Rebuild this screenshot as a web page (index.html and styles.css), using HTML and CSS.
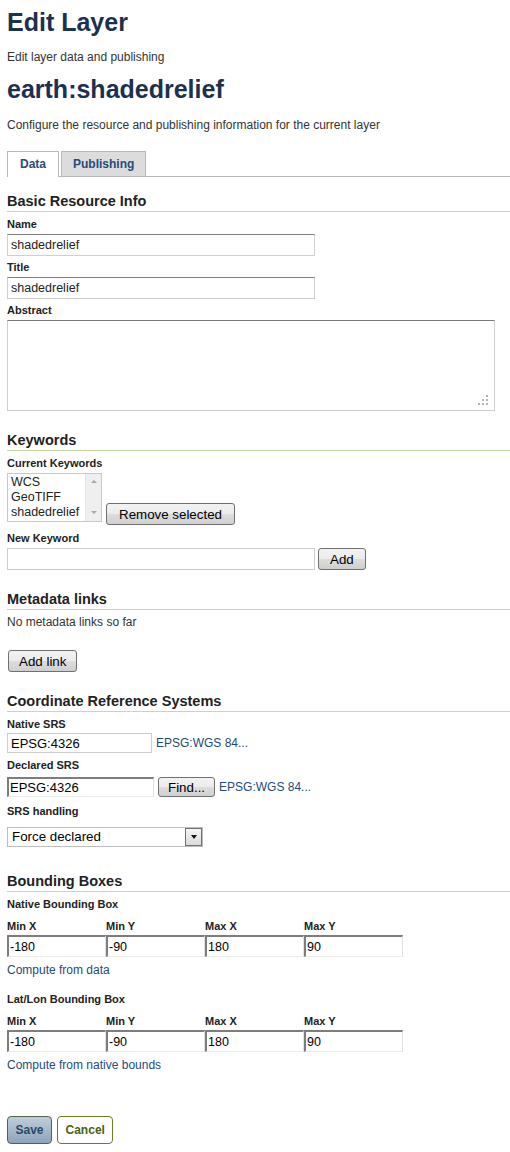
FILE: index.html
```html
<!DOCTYPE html>
<html lang="en">
<head>
<meta charset="utf-8">
<title>Edit Layer</title>
<link rel="stylesheet" href="styles.css">
</head>
<body>
<div class="page">
  <h1 class="title">Edit Layer</h1>
  <p class="subtitle">Edit layer data and publishing</p>
  <h2 class="layer-name">earth:shadedrelief</h2>
  <p class="desc">Configure the resource and publishing information for the current layer</p>

  <ul class="tabs">
    <li class="tab active">Data</li>
    <li class="tab tab-pub">Publishing</li>
  </ul>

  <h3 class="section s-first">Basic Resource Info</h3>
  <label class="lbl mt6">Name</label>
  <input class="text w308" value="shadedrelief">
  <label class="lbl mt5">Title</label>
  <input class="text w308" value="shadedrelief">
  <label class="lbl mt5">Abstract</label>
  <div class="ta-wrap">
    <textarea class="abstract"></textarea>
    <span class="grip"></span>
  </div>

  <h3 class="section">Keywords</h3>
  <label class="lbl mt6">Current Keywords</label>
  <div class="kw-row">
    <div class="listbox">
      <ul class="kw-items">
        <li>WCS</li>
        <li>GeoTIFF</li>
        <li>shadedrelief</li>
      </ul>
      <div class="scrollbar"><span class="arr up"></span><span class="arr down"></span></div>
    </div>
    <button class="btn btn-remove">Remove selected</button>
  </div>
  <label class="lbl mt7">New Keyword</label>
  <div class="row gap3">
    <input class="text plain w308" value="">
    <button class="btn h22">Add</button>
  </div>

  <h3 class="section">Metadata links</h3>
  <p class="note">No metadata links so far</p>
  <button class="btn h22 btn-addlink">Add link</button>

  <h3 class="section">Coordinate Reference Systems</h3>
  <label class="lbl mt6 mb2">Native SRS</label>
  <div class="row gap4">
    <input class="text plain srs w145" value="EPSG:4326">
    <a class="link">EPSG:WGS 84...</a>
  </div>
  <label class="lbl mt6 mb5">Declared SRS</label>
  <div class="row gap4">
    <input class="text inset srs w147" value="EPSG:4326">
    <button class="btn h20 btn-find">Find...</button>
    <a class="link">EPSG:WGS 84...</a>
  </div>
  <label class="lbl mt8 mb9">SRS handling</label>
  <div class="dropdown">
    <span class="dd-text">Force declared</span>
    <span class="dd-arrow"><span class="tri"></span></span>
  </div>

  <h3 class="section s-bbox">Bounding Boxes</h3>
  <label class="lbl mt6 mb9">Native Bounding Box</label>
  <div class="bbox">
    <span class="lbl-col">Min X</span><span class="lbl-col">Min Y</span><span class="lbl-col">Max X</span><span class="lbl-col">Max Y</span>
    <input class="text inset bb" value="-180"><input class="text inset bb" value="-90"><input class="text inset bb" value="180"><input class="text inset bb" value="90">
  </div>
  <a class="link block">Compute from data</a>
  <label class="lbl mt15 mb9">Lat/Lon Bounding Box</label>
  <div class="bbox">
    <span class="lbl-col">Min X</span><span class="lbl-col">Min Y</span><span class="lbl-col">Max X</span><span class="lbl-col">Max Y</span>
    <input class="text inset bb" value="-180"><input class="text inset bb" value="-90"><input class="text inset bb" value="180"><input class="text inset bb" value="90">
  </div>
  <a class="link block">Compute from native bounds</a>

  <div class="actions">
    <button class="btn-save">Save</button>
    <button class="btn-cancel">Cancel</button>
  </div>
</div>
</body>
</html>
```

FILE: styles.css
```css
* { box-sizing: border-box; }

body {
  margin: 0;
  background: #fff;
  font-family: "Liberation Sans", Arial, sans-serif;
  font-size: 12px;
  color: #333;
}

.page { padding: 0 0 0 7px; }

.title, .layer-name {
  margin: 0;
  font-size: 25px;
  line-height: 29px;
  font-weight: bold;
  color: #1c3050;
}
.title { margin-top: 8px; }
.layer-name { margin-top: 10px; }

.subtitle { margin: 13px 0 0; line-height: 15px; }
.desc { margin: 14px 0 0; line-height: 15px; }

/* tabs */
.tabs {
  display: flex;
  align-items: flex-start;
  gap: 2px;
  margin: 18px 0 0;
  padding: 0;
  list-style: none;
  border-bottom: 1px solid #b8b8b8;
}
.tab {
  border: 1px solid #b8b8b8;
  border-bottom: 0;
  background: #dcdcdc;
  padding: 5px 12px 4px;
  line-height: 15px;
  font-weight: bold;
  color: #284b7a;
}
.tab.tab-pub { padding-left: 11px; padding-right: 11px; }
.tab.active {
  background: #fff;
  padding-bottom: 5px;
  margin-bottom: -1px;
}

/* section headings */
.section {
  margin: 20px 0 0;
  font-size: 14.5px;
  line-height: 18px;
  font-weight: bold;
  color: #222;
  padding-bottom: 1px;
  border-bottom: 1px solid #c8dba6;
}
.section.s-first { margin-top: 15px; }
.section.s-bbox { margin-top: 25px; }

/* labels */
.lbl {
  display: block;
  font-size: 11px;
  line-height: 13px;
  font-weight: bold;
  color: #222;
  margin: 6px 0 3px;
}
.mt5 { margin-top: 5px; }
.mt6 { margin-top: 6px; }
.mt7 { margin-top: 7px; }
.mt8 { margin-top: 8px; }
.mt15 { margin-top: 15px; }
.mb2 { margin-bottom: 2px; }
.mb5 { margin-bottom: 5px; }
.mb9 { margin-bottom: 9px; }

/* inputs */
.text {
  display: block;
  height: 22px;
  margin: 0;
  padding: 0 3px;
  font-family: "Liberation Sans", Arial, sans-serif;
  font-size: 12.5px;
  color: #222;
  background: #fff;
  border: 1px solid #cfcfcf;
  border-top-color: #7b7b7b;
  outline: none;
}
.text.plain { border-color: #cdcdcd; }
.text.inset {
  border-style: solid;
  border-width: 2px 1px 1px 2px;
  border-color: #7d7d7d #e2e2e2 #ececec #7d7d7d;
  padding: 0 1px;
}
.w308 { width: 308px; }
.w145 { width: 145px; }
.w147 { width: 147px; }
.srs { height: 20px; font-size: 13px; color: #000; }

.ta-wrap { position: relative; width: 488px; }
.abstract {
  display: block;
  width: 488px;
  height: 91px;
  margin: 0;
  resize: none;
  border: 1px solid #cfcfcf;
  border-top-color: #7b7b7b;
  background: #fff;
}
.grip {
  position: absolute;
  right: 7px;
  bottom: 6px;
  width: 2px;
  height: 2px;
  background: #b5b5b5;
  box-shadow: 0 -4px 0 #b5b5b5, 0 -8px 0 #b5b5b5, -4px 0 0 #b5b5b5, -4px -4px 0 #b5b5b5, -8px 0 0 #b5b5b5;
}

/* keyword list */
.kw-row {
  display: flex;
  align-items: flex-end;
  gap: 4px;
}
.listbox {
  display: flex;
  width: 95px;
  height: 49px;
  margin-bottom: 3px;
  border: 1px solid #c9c9c9;
  background: #fff;
}
.kw-items {
  flex: 1;
  margin: 0;
  padding: 1px 0 0 3px;
  list-style: none;
  font-size: 12.5px;
  line-height: 15px;
  color: #222;
  overflow: hidden;
  white-space: nowrap;
}
.scrollbar {
  width: 16px;
  background: #efefef;
  border-left: 1px solid #e4e4e4;
  display: flex;
  flex-direction: column;
  justify-content: space-between;
  align-items: center;
  padding: 6px 0 7px;
}
.arr { width: 0; height: 0; border-left: 3px solid transparent; border-right: 3px solid transparent; }
.arr.up { border-bottom: 3px solid #a8a8a8; }
.arr.down { border-top: 3px solid #a8a8a8; }

/* buttons */
.btn {
  height: 22px;
  margin: 0;
  padding: 0 11px;
  font-family: "Liberation Sans", Arial, sans-serif;
  font-size: 13.33px;
  color: #000;
  border: 1px solid #707070;
  border-radius: 3px;
  background: linear-gradient(#f2f2f2 0%, #ebebeb 50%, #dddddd 51%, #cfcfcf 100%);
}
.btn-remove { padding: 0 12px; }
.h22 { height: 22px; }
.h20 { height: 20px; }
.btn-addlink { display: block; margin-top: 20px; margin-left: 1px; padding: 0 10px; }
.btn-find { padding: 0 9px; }

.row { display: flex; align-items: center; }
.gap3 { gap: 3px; }
.gap4 { gap: 4px; }

.note { margin: 5px 0 0; line-height: 15px; }

.link {
  color: #1f4a7b;
  text-decoration: none;
  font-size: 12px;
  line-height: 15px;
}
.link.block { display: block; margin-top: 6px; }

/* dropdown */
.dropdown {
  display: flex;
  align-items: stretch;
  width: 196px;
  height: 20px;
  border: 1px solid #bdbdbd;
  background: #fff;
  font-size: 13.33px;
  color: #000;
}
.dd-text { flex: 1; padding-left: 4px; line-height: 18px; }
.dd-arrow {
  width: 17px;
  border: 1px solid #707070;
  background: linear-gradient(#f4f4f4, #dcdcdc);
  display: flex;
  align-items: center;
  justify-content: center;
}
.tri { width: 0; height: 0; border-left: 3.5px solid transparent; border-right: 3.5px solid transparent; border-top: 4px solid #111; }

/* bounding boxes */
.bbox {
  display: grid;
  grid-template-columns: repeat(4, 99px);
  row-gap: 2px;
}
.lbl-col {
  font-size: 11px;
  line-height: 13px;
  font-weight: bold;
  color: #222;
}
.bb { width: 99px; height: 22px; font-size: 12.5px; color: #000; }

/* actions */
.actions {
  display: flex;
  gap: 5px;
  margin-top: 43px;
}
.btn-save, .btn-cancel {
  height: 28px;
  margin: 0;
  padding: 0 7.5px;
  font-family: "Liberation Sans", Arial, sans-serif;
  font-size: 12px;
  font-weight: bold;
  border-radius: 4px;
}
.btn-save {
  color: #27496c;
  border: 1px solid #56634a;
  background: linear-gradient(#bfcddb, #8ea4ba);
}
.btn-cancel {
  color: #4c6112;
  border: 1px solid #6e7d22;
  background: #fff;
}
```
